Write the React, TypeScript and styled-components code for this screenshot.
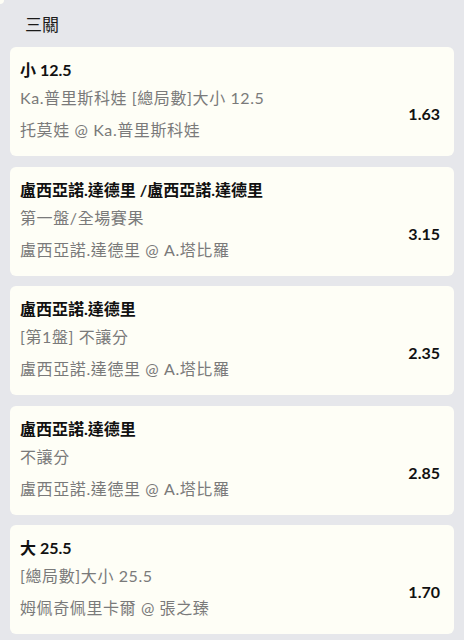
import React from "react";
import styled, { createGlobalStyle } from "styled-components";

const GlobalStyle = createGlobalStyle`
  html, body {
    margin: 0;
    padding: 0;
    background: #e6e7eb;
  }
  body {
    font-family: Lato, "Noto Sans CJK TC", sans-serif;
    -webkit-font-smoothing: antialiased;
  }
`;

type Leg = {
  pick: string;
  market: string;
  event: string;
  odds: string;
};

const legs: Leg[] = [
  { pick: "小 12.5", market: "Ka.普里斯科娃 [總局數]大小 12.5", event: "托莫娃 @ Ka.普里斯科娃", odds: "1.63" },
  { pick: "盧西亞諾.達德里 /盧西亞諾.達德里", market: "第一盤/全場賽果", event: "盧西亞諾.達德里 @ A.塔比羅", odds: "3.15" },
  { pick: "盧西亞諾.達德里", market: "[第1盤] 不讓分", event: "盧西亞諾.達德里 @ A.塔比羅", odds: "2.35" },
  { pick: "盧西亞諾.達德里", market: "不讓分", event: "盧西亞諾.達德里 @ A.塔比羅", odds: "2.85" },
  { pick: "大 25.5", market: "[總局數]大小 25.5", event: "姆佩奇佩里卡爾 @ 張之臻", odds: "1.70" },
];

function App() {
  return (
    <Page>
      <GlobalStyle />
      <Header>三關</Header>
      <List>
        {legs.map((leg, i) => (
          <Card key={i}>
            <Pick>{leg.pick}</Pick>
            <Body>
              <Info>
                <Market>{leg.market}</Market>
                <Event>{leg.event}</Event>
              </Info>
              <Odds>{leg.odds}</Odds>
            </Body>
          </Card>
        ))}
      </List>
    </Page>
  );
}

const Page = styled.div`
  position: relative;
  width: 464px;
  min-height: 640px;
  box-sizing: border-box;
  padding: 0 10px;
  background: #e6e7eb;

  &::before {
    content: "";
    position: absolute;
    left: 0;
    top: 0;
    width: 4px;
    height: 4px;
    background: #fefef6;
    border-bottom-right-radius: 4px;
  }
`;

const Header = styled.div`
  padding: 14px 0 0 15px;
  height: 33px;
  line-height: 22px;
  font-size: 17px;
  color: #1a1a1a;
`;

const List = styled.div`
  display: flex;
  flex-direction: column;
  gap: 10.5px;
`;

const Card = styled.div`
  background: #fefef6;
  border-radius: 6px;
  padding: 12px 14px 15px 10px;
  display: flex;
  flex-direction: column;
`;

const Pick = styled.div`
  font-size: 16px;
  line-height: 22px;
  font-weight: 700;
  color: #111;
  white-space: nowrap;
`;

const Body = styled.div`
  display: flex;
  align-items: center;
  justify-content: space-between;
  margin-top: 6px;
`;

const Info = styled.div`
  display: flex;
  flex-direction: column;
  gap: 10px;
`;

const Market = styled.div`
  font-size: 16px;
  line-height: 22px;
  letter-spacing: 0.6px;
  color: #7a7a7a;
  white-space: nowrap;
`;

const Event = styled(Market)``;

const Odds = styled.div`
  font-size: 16px;
  line-height: 22px;
  font-weight: 700;
  color: #111;
`;

export default App;
